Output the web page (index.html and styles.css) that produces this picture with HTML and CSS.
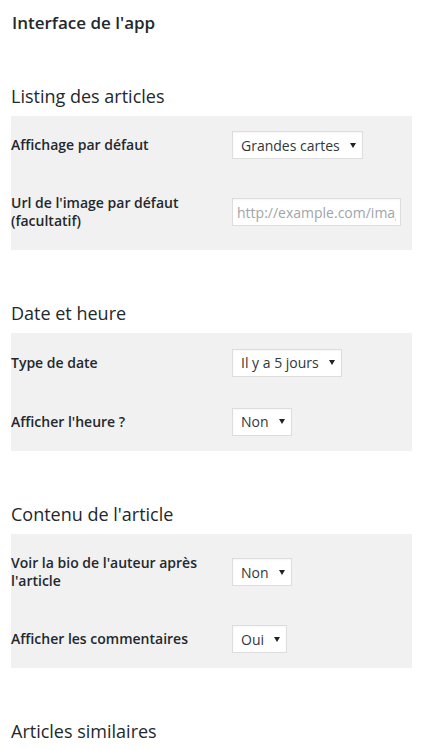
FILE: index.html
```html
<!DOCTYPE html>
<html lang="fr">
<head>
<meta charset="utf-8">
<link rel="stylesheet" href="styles.css">
</head>
<body>
<div class="page">
  <h1 class="page-title">Interface de l'app</h1>

  <h2 class="section-title">Listing des articles</h2>
  <div class="form-table">
    <div class="row">
      <div class="th">Affichage par défaut</div>
      <div class="td">
        <div class="select"><span>Grandes cartes</span><svg class="arrow" width="6" height="5" viewBox="0 0 6 5"><path d="M0 0H6L3 5Z"/></svg></div>
      </div>
    </div>
    <div class="row">
      <div class="th">Url de l'image par défaut (facultatif)</div>
      <div class="td">
        <input class="text-input" type="text" placeholder="http://example.com/image.jpg">
      </div>
    </div>
  </div>

  <h2 class="section-title">Date et heure</h2>
  <div class="form-table">
    <div class="row row-tall">
      <div class="th">Type de date</div>
      <div class="td">
        <div class="select"><span>Il y a 5 jours</span><svg class="arrow" width="6" height="5" viewBox="0 0 6 5"><path d="M0 0H6L3 5Z"/></svg></div>
      </div>
    </div>
    <div class="row row-tall">
      <div class="th">Afficher l'heure ?</div>
      <div class="td">
        <div class="select"><span>Non</span><svg class="arrow" width="6" height="5" viewBox="0 0 6 5"><path d="M0 0H6L3 5Z"/></svg></div>
      </div>
    </div>
  </div>

  <h2 class="section-title">Contenu de l'article</h2>
  <div class="form-table">
    <div class="row">
      <div class="th">Voir la bio de l'auteur après l'article</div>
      <div class="td">
        <div class="select"><span>Non</span><svg class="arrow" width="6" height="5" viewBox="0 0 6 5"><path d="M0 0H6L3 5Z"/></svg></div>
      </div>
    </div>
    <div class="row">
      <div class="th">Afficher les commentaires</div>
      <div class="td">
        <div class="select"><span>Oui</span><svg class="arrow" width="6" height="5" viewBox="0 0 6 5"><path d="M0 0H6L3 5Z"/></svg></div>
      </div>
    </div>
  </div>

  <h2 class="section-title">Articles similaires</h2>
</div>
</body>
</html>
```

FILE: styles.css
```css
* { box-sizing: border-box; }

html, body {
  margin: 0;
  padding: 0;
  background: #ffffff;
}

body {
  font-family: "Open Sans", "Noto Sans", sans-serif;
  color: #23282d;
}

.page {
  padding: 12px 13px 0 11px;
}

.page-title {
  margin: 0 0 0 1px;
  font-size: 17px;
  font-weight: 600;
  line-height: 21px;
  color: #23282d;
}

.section-title {
  margin: 52px 0 8px;
  font-size: 18px;
  font-weight: 400;
  line-height: 23px;
  color: #23282d;
}

.form-table {
  background: #f1f1f1;
  width: 401px;
}

.row {
  display: grid;
  grid-template-columns: 211px 1fr;
}

.row-tall .th {
  padding-top: 21px;
}

.th {
  padding: 20px 10px 20px 0;
  font-size: 14px;
  font-weight: 600;
  line-height: 18px;
  align-self: start;
}

.td {
  padding: 15px 10px;
  align-self: center;
  display: flex;
}

.select {
  display: inline-flex;
  align-items: center;
  gap: 10px;
  height: 28px;
  padding: 0 6px 0 8px;
  background: #ffffff;
  border: 1px solid #dddddd;
  box-shadow: inset 0 1px 2px rgba(0,0,0,0.04);
  font-size: 14px;
  color: #32373c;
}

.arrow {
  fill: #222222;
  flex: none;
}

.text-input {
  width: 169px;
  height: 28px;
  padding: 0 4px;
  border: 1px solid #dddddd;
  box-shadow: inset 0 1px 2px rgba(0,0,0,0.04);
  background: #ffffff;
  font-family: "Open Sans", "Noto Sans", sans-serif;
  font-size: 14px;
  color: #32373c;
  outline: none;
}

.text-input::placeholder {
  color: #a0a5aa;
}
```
